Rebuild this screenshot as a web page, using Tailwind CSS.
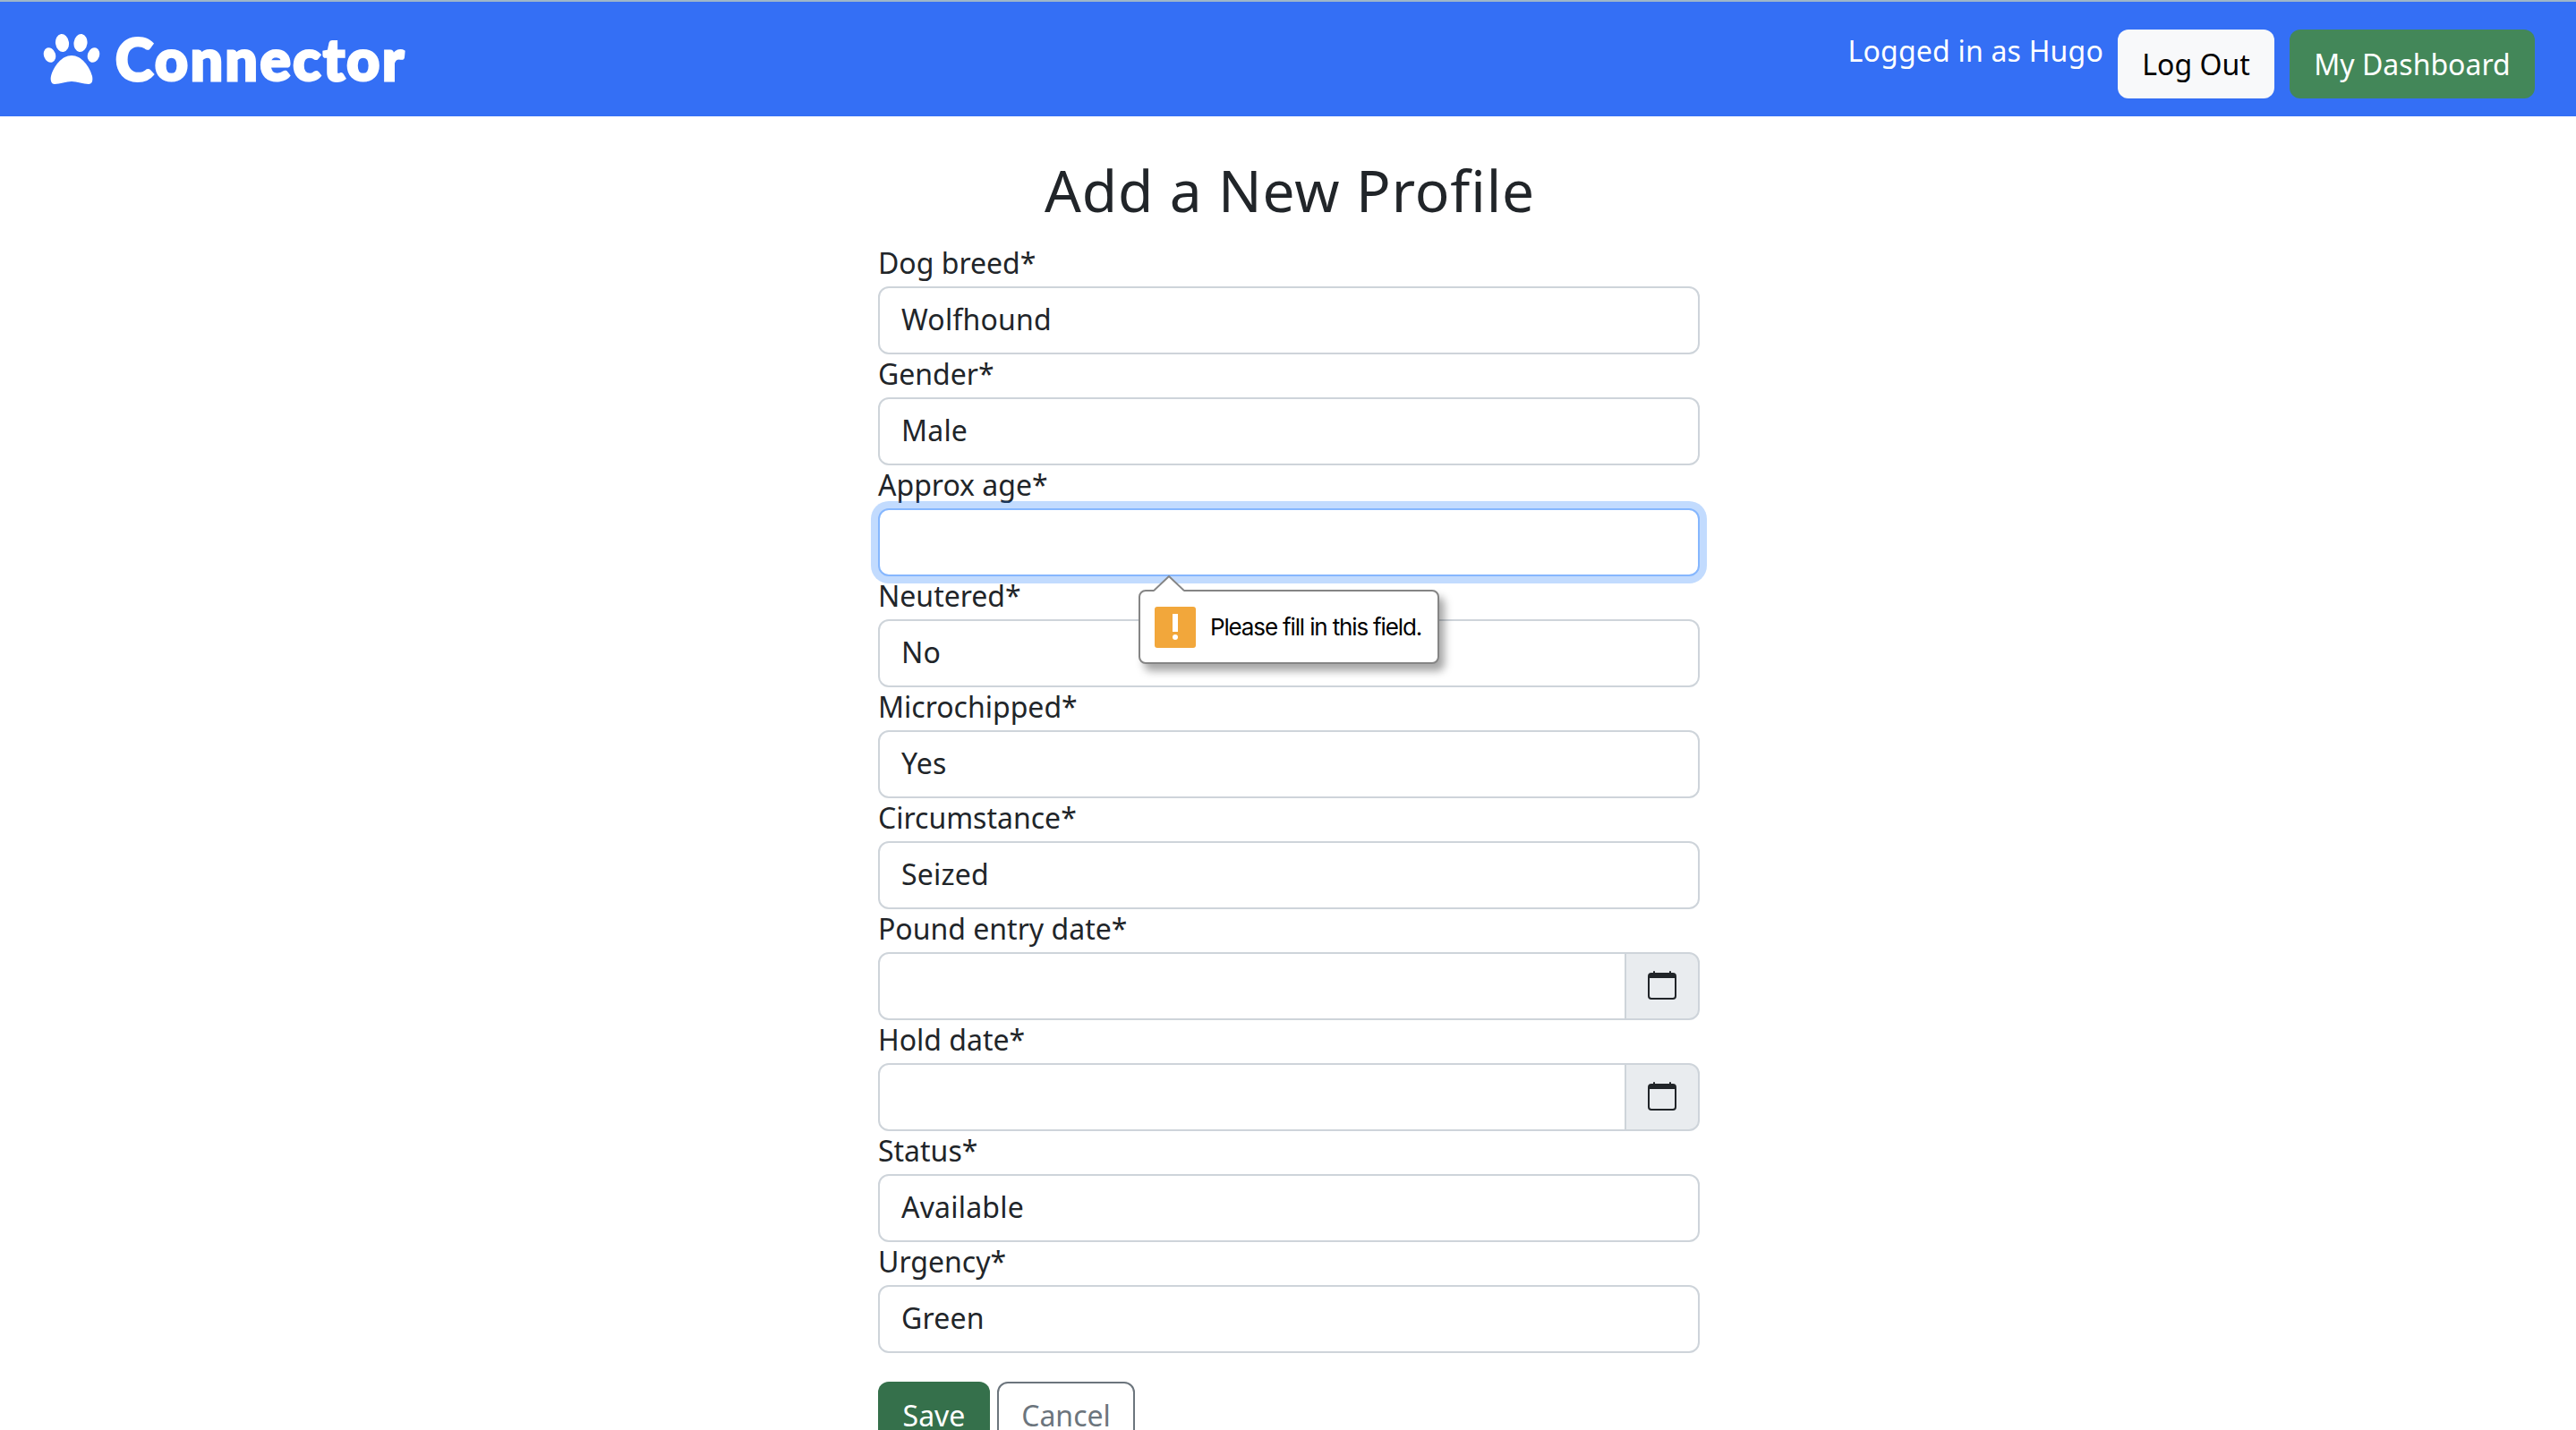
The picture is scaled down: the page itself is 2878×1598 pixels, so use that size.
<!DOCTYPE html>
<html lang="en">
<head>
  <meta charset="UTF-8" />
  <meta name="viewport" content="width=device-width, initial-scale=1.0" />
  <title>Add a New Profile</title>
  <script src="https://cdn.jsdelivr.net/npm/@tailwindcss/browser@4"></script>
</head>
<body class="h-[1598px] overflow-hidden bg-white text-[32px] leading-[48px] text-[#212529] [font-family:'Noto_Sans',sans-serif]">
  <header class="h-[130px] border-t-2 border-[#9fb6c8] bg-[#346ff5] flex justify-between pl-[48px] pr-[46px]">
    <a class="flex items-center gap-[17px] text-white" href="#">
      <svg class="w-[64px] h-[56px]" viewBox="0 0 64 56" fill="white">
        <ellipse cx="7.500" cy="23.500" rx="6.500" ry="8.500" transform="rotate(-20 7.500 23.500)" />
        <ellipse cx="21.500" cy="10" rx="7.500" ry="10" transform="rotate(-8 21.500 10)" />
        <ellipse cx="42" cy="10" rx="7.500" ry="10" transform="rotate(8 42 10)" />
        <ellipse cx="56.500" cy="23.500" rx="6.500" ry="8.500" transform="rotate(20 56.500 23.500)" />
        <path d="M32 24c-11 0-20 12-23 23-1 4 0 9 4 9 6 0 13-3 19-3s13 3 19 3c4 0 5-4 4-9-3-11-12-23-23-23z" />
      </svg>
      <span class="text-[64px] leading-none font-black tracking-[2.600px] [-webkit-text-stroke:3px_white] [font-family:'Lato',sans-serif]">Connector</span>
    </a>
    <div class="flex items-start pt-[31px]">
      <span class="text-white leading-[48px] mr-[16px] tracking-[0.2px]">Logged in as Hugo</span>
      <a class="h-[77px] w-[175px] rounded-[12px] bg-[#f8f9fa] text-black flex items-center justify-center mr-[17px]" href="#">Log Out</a>
      <a class="h-[77px] w-[274px] rounded-[12px] bg-[#438759] text-white flex items-center justify-center" href="#">My Dashboard</a>
    </div>
  </header>

  <main class="relative w-[918px] ml-[981px]">
    <h1 class="text-[64px] leading-[77px] text-center tracking-[0.9px] pl-[2px] pt-[44px] pb-[21px] box-content">Add a New Profile</h1>
    <form>
      <label class="block h-[48px] leading-[44px]">Dog breed*</label>
      <input class="block w-full h-[76px] px-[24px] pb-[3px] tracking-[0.2px] border-2 border-[#ced4da] rounded-[12px] bg-white outline-none" value="Wolfhound" />
      <label class="block h-[48px] leading-[44px]">Gender*</label>
      <input class="block w-full h-[76px] px-[24px] pb-[3px] tracking-[0.2px] border-2 border-[#ced4da] rounded-[12px] bg-white outline-none" value="Male" />
      <label class="block h-[48px] leading-[44px]">Approx age*</label>
      <input class="block w-full h-[76px] px-[24px] pb-[3px] tracking-[0.2px] border-2 border-[#86b7fe] rounded-[12px] bg-white outline-none shadow-[0_0_0_8px_rgba(13,110,253,0.25)] relative" value="" />
      <label class="block h-[48px] leading-[44px]">Neutered*</label>
      <input class="block w-full h-[76px] px-[24px] pb-[3px] tracking-[0.2px] border-2 border-[#ced4da] rounded-[12px] bg-white outline-none" value="No" />
      <label class="block h-[48px] leading-[44px]">Microchipped*</label>
      <input class="block w-full h-[76px] px-[24px] pb-[3px] tracking-[0.2px] border-2 border-[#ced4da] rounded-[12px] bg-white outline-none" value="Yes" />
      <label class="block h-[48px] leading-[44px]">Circumstance*</label>
      <input class="block w-full h-[76px] px-[24px] pb-[3px] tracking-[0.2px] border-2 border-[#ced4da] rounded-[12px] bg-white outline-none" value="Seized" />
      <label class="block h-[48px] leading-[44px]">Pound entry date*</label>
      <div class="flex h-[76px]">
        <input class="flex-1 min-w-0 px-[24px] border-2 border-[#ced4da] rounded-l-[12px] bg-white outline-none" value="" />
        <span class="w-[84px] -ml-[2px] pb-[2px] flex items-center justify-center border-2 border-[#ced4da] rounded-r-[12px] bg-[#e9ecef]">
          <svg class="w-[32px] h-[32px]" viewBox="0 0 16 16" fill="#212529">
            <path d="M3.500 0a.5.5 0 0 1 .5.5V1h8V.5a.5.5 0 0 1 1 0V1h1a2 2 0 0 1 2 2v11a2 2 0 0 1-2 2H2a2 2 0 0 1-2-2V3a2 2 0 0 1 2-2h1V.5a.5.5 0 0 1 .5-.5zM1 4v10a1 1 0 0 0 1 1h12a1 1 0 0 0 1-1V4H1z" />
          </svg>
        </span>
      </div>
      <label class="block h-[48px] leading-[44px]">Hold date*</label>
      <div class="flex h-[76px]">
        <input class="flex-1 min-w-0 px-[24px] border-2 border-[#ced4da] rounded-l-[12px] bg-white outline-none" value="" />
        <span class="w-[84px] -ml-[2px] pb-[2px] flex items-center justify-center border-2 border-[#ced4da] rounded-r-[12px] bg-[#e9ecef]">
          <svg class="w-[32px] h-[32px]" viewBox="0 0 16 16" fill="#212529">
            <path d="M3.500 0a.5.5 0 0 1 .5.5V1h8V.5a.5.5 0 0 1 1 0V1h1a2 2 0 0 1 2 2v11a2 2 0 0 1-2 2H2a2 2 0 0 1-2-2V3a2 2 0 0 1 2-2h1V.5a.5.5 0 0 1 .5-.5zM1 4v10a1 1 0 0 0 1 1h12a1 1 0 0 0 1-1V4H1z" />
          </svg>
        </span>
      </div>
      <label class="block h-[48px] leading-[44px]">Status*</label>
      <input class="block w-full h-[76px] px-[24px] pb-[3px] tracking-[0.2px] border-2 border-[#ced4da] rounded-[12px] bg-white outline-none" value="Available" />
      <label class="block h-[48px] leading-[44px]">Urgency*</label>
      <input class="block w-full h-[76px] px-[24px] pb-[3px] tracking-[0.2px] border-2 border-[#ced4da] rounded-[12px] bg-white outline-none" value="Green" />
      <div class="flex gap-[8px] mt-[32px]">
        <button type="button" class="h-[76px] w-[125px] rounded-[12px] bg-[#35704b] text-white">Save</button>
        <button type="button" class="h-[76px] w-[154px] rounded-[12px] border-2 border-[#6c757d] text-[#6c757d]">Cancel</button>
      </div>
    </form>

    <!-- browser validation bubble -->
    <div class="absolute left-[291px] top-[529px] w-[336px] h-[83px] rounded-[8px] border-2 border-[#858585] bg-white shadow-[6px_8px_10px_rgba(0,0,0,0.35)] flex items-center pl-[16px] gap-[16px]">
      <svg class="absolute -top-[18px] left-[15px] w-[34px] h-[18px]" viewBox="0 0 34 18">
        <path d="M0 18L17 1l17 17z" fill="white" />
        <path d="M0 17L17 1l17 16" fill="none" stroke="#858585" stroke-width="2" />
      </svg>
      <span class="w-[46px] h-[46px] rounded-[3px] bg-[#f2a73b] flex flex-col items-center justify-center gap-[3px]">
        <span class="block w-[6px] h-[20px] bg-white"></span>
        <span class="block w-[6px] h-[6px] rounded-full bg-white"></span>
      </span>
      <span class="text-[26px] leading-[32px] text-black tracking-[-1.150px] [font-family:'Inter',sans-serif]">Please fill in this field.</span>
    </div>
  </main>
</body>
</html>
